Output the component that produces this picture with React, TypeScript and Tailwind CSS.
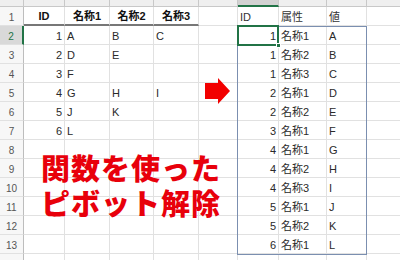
import React from "react";

const cols = ["", "A", "B", "C", "D", "E", "F", "G", "H", "I"];
const leftRows = [
  ["1", "A", "B", "C"],
  ["2", "D", "E", ""],
  ["3", "F", "", ""],
  ["4", "G", "H", "I"],
  ["5", "J", "K", ""],
  ["6", "L", "", ""],
];
const rightRows = [
  ["1", "名称1", "A"],
  ["1", "名称2", "B"],
  ["1", "名称3", "C"],
  ["2", "名称1", "D"],
  ["2", "名称2", "E"],
  ["3", "名称1", "F"],
  ["4", "名称1", "G"],
  ["4", "名称2", "H"],
  ["4", "名称3", "I"],
  ["5", "名称1", "J"],
  ["5", "名称2", "K"],
  ["6", "名称1", "L"],
];

const Cell = ({
  children,
  className = "",
}: {
  children?: React.ReactNode;
  className?: string;
}) => (
  <div
    className={`flex items-center pt-[2px] px-[2px] border-r border-b border-[#e1e1e1] text-[11px] text-[#2a2a2a] overflow-hidden whitespace-nowrap ${className}`}
  >
    {children}
  </div>
);

const App = () => {
  const rows = Array.from({ length: 14 }, (_, i) => i + 1);
  return (
    <div
      className="relative w-[400px] h-[260px] overflow-hidden bg-white"
      style={{ fontFamily: '"Liberation Sans", "Noto Sans CJK JP", sans-serif' }}
    >
      <div className="grid grid-cols-[24px_41px_45px_44px_45px_39px_41px_48px_40px_60px] grid-rows-[7px_repeat(14,19px)]">
        {/* column header strip */}
        {cols.map((c, i) => (
          <div
            key={"h" + i}
            className={`border-r border-b border-[#c8c8c8] ${
              i === 6 ? "bg-[#d2d2d2] border-b-2 border-b-[#217346]" : "bg-[#efefef]"
            }`}
          />
        ))}
        {rows.map((r) => (
          <React.Fragment key={r}>
            <div
              className={`flex items-center justify-center pt-[2px] text-[10px] border-b border-[#e1e1e1] border-r ${
                r === 2
                  ? "bg-[#d9d9d9] text-[#217346] border-r-2 border-r-[#217346]"
                  : "bg-[#f7f7f7] text-[#555] border-r-[#bdbdbd]"
              }`}
            >
              {r < 14 ? r : ""}
            </div>
            {r === 1 ? (
              <>
                {["ID", "名称1", "名称2", "名称3"].map((h) => (
                  <Cell
                    key={h}
                    className="justify-center font-bold text-[10px] text-[#111] border-b-2 border-b-[#777]"
                  >
                    {h}
                  </Cell>
                ))}
                <Cell />
                <Cell className="text-[#333]">ID</Cell>
                <Cell className="text-[#333]">属性</Cell>
                <Cell className="text-[#333]">値</Cell>
                <Cell />
              </>
            ) : (
              <>
                {[0, 1, 2, 3].map((k) => {
                  const v = leftRows[r - 2]?.[k] ?? "";
                  return (
                    <Cell key={k} className={k === 0 ? "justify-end" : ""}>
                      {v}
                    </Cell>
                  );
                })}
                <Cell />
                {[0, 1, 2].map((k) => {
                  const v = rightRows[r - 2]?.[k] ?? "";
                  return (
                    <Cell key={k} className={k === 0 ? "justify-end" : ""}>
                      {v}
                    </Cell>
                  );
                })}
                <Cell />
              </>
            )}
          </React.Fragment>
        ))}
      </div>

      {/* range border F2:H13 */}
      <div className="absolute left-[237px] top-[26px] w-[130px] h-[229px] border border-[#7b8fb0] pointer-events-none" />
      {/* active cell F2 */}
      <div className="absolute left-[237px] top-[25px] w-[42px] h-[21px] border-2 border-[#217346]" />
      <div className="absolute left-[276px] top-[43px] w-[5px] h-[5px] bg-[#217346] border border-white" />

      {/* arrow */}
      <svg className="absolute left-[204px] top-[77px]" width="28" height="28" viewBox="0 0 28 28">
        <polygon points="1,6 14,6 14,1 26,14 14,27 14,22 1,22" fill="#f20000" />
      </svg>

      {/* caption */}
      <div
        className="absolute left-[41px] top-[150px] text-[29px] leading-[35px] font-black text-[#e8000b] tracking-[1px]"
        style={{ fontFamily: '"Noto Sans CJK JP", sans-serif' }}
      >
        <div>関数を使った</div>
        <div>ピボット解除</div>
      </div>
    </div>
  );
};

export default App;
